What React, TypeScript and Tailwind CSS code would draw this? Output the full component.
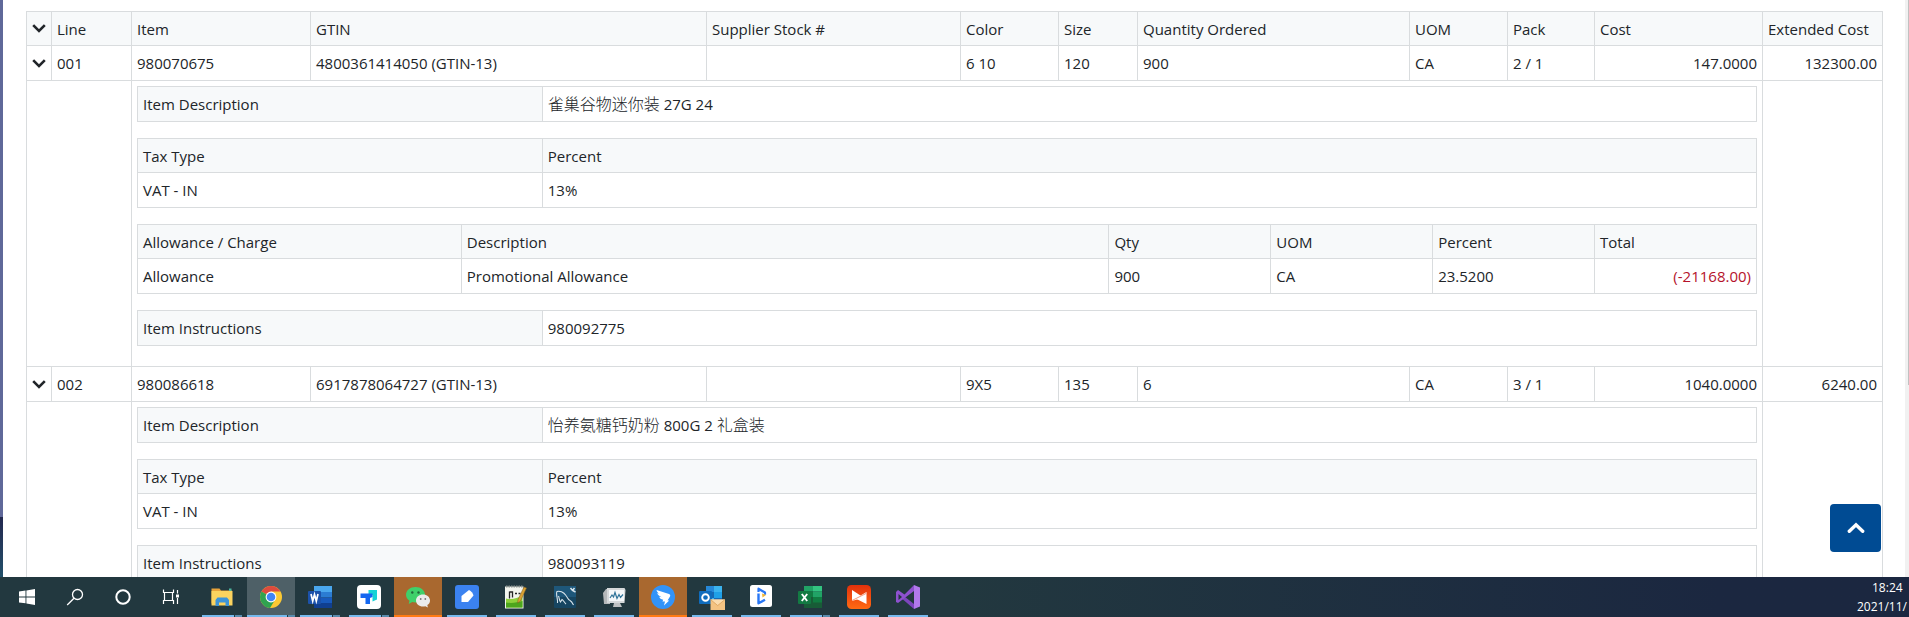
import React from "react";

type Line = {
  line: string;
  item: string;
  gtin: string;
  color: string;
  size: string;
  qty: string;
  pack: string;
  cost: string;
  extended: string;
  description: React.ReactNode;
  allowance?: string[];
  instructions: string;
};

const Han = ({ children }: { children: string }) => (
  <span lang="zh-CN" className="text-base leading-6 font-light">{children}</span>
);

const lines: Line[] = [
  {
    line: "001",
    item: "980070675",
    gtin: "4800361414050 (GTIN-13)",
    color: "6 10",
    size: "120",
    qty: "900",
    pack: "2 / 1",
    cost: "147.0000",
    extended: "132300.00",
    description: <><Han>雀巢谷物迷你装</Han> 27G 24</>,
    allowance: ["Allowance", "Promotional Allowance", "900", "CA", "23.5200", "(-21168.00)"],
    instructions: "980092775",
  },
  {
    line: "002",
    item: "980086618",
    gtin: "6917878064727 (GTIN-13)",
    color: "9X5",
    size: "135",
    qty: "6",
    pack: "3 / 1",
    cost: "1040.0000",
    extended: "6240.00",
    description: <><Han>怡养氨糖钙奶粉</Han> 800G 2 <Han>礼盒装</Han></>,
    instructions: "980093119",
  },
];

const table = "w-full table-fixed border-collapse";
const head = "h-[34px] border border-[#d9dcde] bg-[#f7f9fa] px-[5px] py-0 text-left font-normal";
const label = "h-[35px] border border-[#d9dcde] bg-[#f7f9fa] px-[5px] py-0 text-left font-normal";
const cell = "h-[35px] border border-[#d9dcde] px-[5px] py-0";

function Toggle({ name }: { name: string }) {
  return (
    <button type="button" aria-label={name} className="flex w-full items-center justify-center">
      <svg width="14" height="9" viewBox="0 0 14 9" fill="none" stroke="#212529" strokeWidth="2.6">
        <path d="M1.2 1.2 7 7l5.8-5.8" />
      </svg>
    </button>
  );
}

function PairTable({ name, children }: { name: string; children: React.ReactNode }) {
  return (
    <table className={table}>
      <tbody>
        <tr>
          <th scope="row" className={`${label} w-1/4`}>{name}</th>
          <td className={cell}>{children}</td>
        </tr>
      </tbody>
    </table>
  );
}

function TaxTable() {
  return (
    <table className={table}>
      <thead>
        <tr>
          <th className={`${head} w-1/4`}>Tax Type</th>
          <th className={head}>Percent</th>
        </tr>
      </thead>
      <tbody>
        <tr>
          <td className={cell}>VAT - IN</td>
          <td className={cell}>13%</td>
        </tr>
      </tbody>
    </table>
  );
}

function AllowanceTable({ values }: { values: string[] }) {
  return (
    <table className={table}>
      <thead>
        <tr>
          <th className={`${head} w-1/5`}>Allowance / Charge</th>
          <th className={`${head} w-2/5`}>Description</th>
          <th className={`${head} w-1/10`}>Qty</th>
          <th className={`${head} w-1/10`}>UOM</th>
          <th className={`${head} w-1/10`}>Percent</th>
          <th className={`${head} w-1/10`}>Total</th>
        </tr>
      </thead>
      <tbody>
        <tr>
          {values.map((v, i) => (
            <td key={i} className={i === 5 ? `${cell} text-right text-[#b5122b]` : cell}>{v}</td>
          ))}
        </tr>
      </tbody>
    </table>
  );
}

function LineRows({ l }: { l: Line }) {
  return (
    <>
      <tr>
        <td className={cell}><Toggle name={`Toggle line ${l.line}`} /></td>
        <td className={cell}>{l.line}</td>
        <td className={cell}>{l.item}</td>
        <td className={cell}>{l.gtin}</td>
        <td className={cell}></td>
        <td className={cell}>{l.color}</td>
        <td className={cell}>{l.size}</td>
        <td className={cell}>{l.qty}</td>
        <td className={cell}>CA</td>
        <td className={cell}>{l.pack}</td>
        <td className={`${cell} text-right`}>{l.cost}</td>
        <td className={`${cell} text-right`}>{l.extended}</td>
      </tr>
      <tr>
        <td colSpan={2} className={cell}></td>
        <td colSpan={9} className="border border-[#d9dcde] px-[5px] pt-[5px] pb-5">
          <div className="flex flex-col gap-4">
            <PairTable name="Item Description">{l.description}</PairTable>
            <TaxTable />
            {l.allowance && <AllowanceTable values={l.allowance} />}
            <PairTable name="Item Instructions">{l.instructions}</PairTable>
          </div>
        </td>
        <td className={cell}></td>
      </tr>
    </>
  );
}

const icon = { width: 26, height: 26, viewBox: "0 0 26 26" };

const Explorer = (
  <svg {...icon}>
    <path d="M2.500 4.500h8l1.500 2h11v13h-20.500z" fill="#e8a33a" />
    <path d="M2.500 7h21v14.500h-21z" fill="#fbd35f" />
    <path d="M20 4.500h2.500V7H20z" fill="#4db6a0" />
    <path d="M6.500 22v-6l2-2.500h9.500l2 2.500v6h-3.500v-3.500h-6.500V22z" fill="#3d94d8" />
  </svg>
);
const Chrome = (
  <svg {...icon}>
    <circle cx="13" cy="13" r="11" fill="#fcc934" />
    <path d="M13 13 3.500 7.500A11 11 0 0 1 22.500 7.500H13z" fill="#dd4b3e" />
    <path d="M3.500 7.500A11 11 0 0 0 12 24l5.200-8.500L13 13z" fill="#30a350" />
    <circle cx="13" cy="13" r="5.400" fill="#fff" />
    <circle cx="13" cy="13" r="4.300" fill="#4285f4" />
  </svg>
);
const Word = (
  <svg {...icon}>
    <path d="M7 2h18v6H7z" fill="#4aa7ee" />
    <path d="M7 8h18v5.500H7z" fill="#2b7cd3" />
    <path d="M7 13.500h18V19H7z" fill="#185abd" />
    <path d="M7 19h18v5H7z" fill="#103f91" />
    <rect x="1" y="7" width="13" height="13" rx="1" fill="#1c52ab" />
    <path d="m4 10 1.700 7L7.500 10.500 9.300 17 11 10" fill="none" stroke="#fff" strokeWidth="1.700" />
  </svg>
);
const Docs = (
  <svg {...icon}>
    <rect x="1" y="1" width="24" height="24" rx="4" fill="#fff" />
    <path d="M12.500 6H21v9.500l-4.500 2V11h-4z" fill="#16d3d6" />
    <path d="M4.500 9.500H16.500v3.500L14 14v6H9.500v-6h-5z" fill="#1467f0" />
  </svg>
);
const WeChat = (
  <svg {...icon}>
    <path d="M10.500 3C5.200 3 1 6.400 1 10.700c0 2.500 1.400 4.600 3.500 6L3.700 20l3.500-1.900c1 .3 2.200.4 3.300.4 5.300 0 9.500-3.400 9.500-7.700S15.800 3 10.500 3z" fill="#3fd06a" />
    <circle cx="7.300" cy="8.500" r="1.200" fill="#22653a" />
    <circle cx="13.500" cy="8.500" r="1.200" fill="#22653a" />
    <path d="M18 10.500c-4 0-7 2.600-7 6s3 6 7 6c.8 0 1.500-.1 2.300-.3l2.600 1.400-.6-2.500c1.700-1.100 2.700-2.600 2.700-4.600 0-3.400-3-6-7-6z" fill="#ebebeb" />
    <circle cx="15.700" cy="15" r=".9" fill="#777" />
    <circle cx="20.300" cy="15" r=".9" fill="#777" />
  </svg>
);
const BlueNote = (
  <svg {...icon}>
    <rect x="1" y="1" width="24" height="24" rx="3" fill="#3b82f0" />
    <path d="M7.500 18v-6L15 6c2.300 1.200 3.800 3 4.500 5.500L14 18z" fill="#fff" />
  </svg>
);
const Notepad = (
  <svg {...icon}>
    <path d="M2 2.500h18.500v22H2z" fill="#f3f5ee" />
    <path d="M3 14.500c6 1.500 11-.5 16.500-2.500v11.500H3z" fill="#8fd03c" />
    <path d="M3 18.500c6 1 11 0 16.500-1.500v6.500H3z" fill="#4da51d" />
    <path d="M3 2.500h17" stroke="#8a928f" strokeWidth="2" strokeDasharray="1.500 1" />
    <path d="M6.500 7.500v7M6.500 8h3v5.500M12 9.500h2m1.500 0h2" stroke="#262626" strokeWidth="1.300" fill="none" />
    <path d="m21 3 2.500 1-6 13-2.800 2 .3-3.500z" fill="#d9a032" stroke="#7d5a1c" strokeWidth=".5" />
  </svg>
);
const MySql = (
  <svg {...icon}>
    <rect x="2" y="2" width="22" height="22" rx="1" fill="#164561" />
    <path d="M2 2h22v11H2z" fill="#1e577a" />
    <path d="M5.500 19C6 15 3.500 9.500 5 7.500c2.500-1 6.500.5 9 4 1.500 2 2 4.500 4 5 1.500.700 2.500 2.500 3.500 4.500M6.500 12c1 2.500.5 4 2 6l1.500-2.500c1.500 1 2.500 3 4 4.500" fill="none" stroke="#d9e5ec" strokeWidth="1.100" />
    <path d="m18.500 4 2 2.500L23.500 8M20.500 6.500 22.500 4" fill="none" stroke="#d9e5ec" strokeWidth="1.500" />
  </svg>
);
const Monitor = (
  <svg {...icon}>
    <path d="M2 9 5 5h4v15H3z" fill="#b5b8ba" />
    <path d="M6 4h17.500l1 2-1 13H6z" fill="#d5d8da" />
    <path d="M8 6h15v11H8z" fill="#f4f7f9" />
    <path d="m9 14 2-3 1.500 2L14 8.500l2 6 2-4 1.500 3 2.500-3" fill="none" stroke="#2f7399" strokeWidth="1.200" />
    <path d="M13 19h6l2 4h-9z" fill="#bec1c3" />
  </svg>
);
const DingTalk = (
  <svg {...icon}>
    <circle cx="13" cy="13" r="12" fill="#3293f8" />
    <path d="M6.500 6 19 10c1.300.5 1.500 1.500 1 2.500l-2.500 4h1.700L14 21.500l1-4h-2.500l.7-1.700c-2.200-.5-3.500-1.500-4-3l2.500.4C9 12 7.600 10.800 7.300 9l2.200.8C7.600 8.600 6.700 7.500 6.500 6z" fill="#fff" />
  </svg>
);
const Outlook = (
  <svg {...icon}>
    <path d="M7 2h16v17H7z" fill="#1769b5" />
    <path d="M7 2h8v6H7z" fill="#2688d8" />
    <path d="M15 2h8v6h-8zM7 14h8v5H7z" fill="#3bb3ee" />
    <path d="M15 8h8v6h-8z" fill="#1fa0e7" />
    <rect x="0" y="7" width="13" height="13" rx="1" fill="#0f6cbd" />
    <circle cx="6.500" cy="13.500" r="3.300" fill="none" stroke="#fff" strokeWidth="1.900" />
    <path d="M11.500 15.500H26V26H11.500z" fill="#f4c382" />
    <path d="m11.500 15.500 7.200 6L26 15.500" fill="#fbdcae" stroke="#d59a50" strokeWidth=".7" />
  </svg>
);
const LetterApp = (
  <svg {...icon}>
    <rect x="2" y="1" width="22" height="22" rx="2.500" fill="#fff" />
    <path d="M10.500 8V4.700L17 8.500v2.200" fill="none" stroke="#2877f5" strokeWidth="2.200" strokeLinejoin="round" />
    <path d="M10.500 9.500v9.800l6.500-3.500" fill="none" stroke="#2877f5" strokeWidth="2.400" strokeLinejoin="round" />
    <path d="m14 9.500 4 1.500-3.500 2.500z" fill="#f5b52e" />
  </svg>
);
const Excel = (
  <svg {...icon}>
    <path d="M7 2h9v5.500H7z" fill="#21a366" />
    <path d="M16 2h9v5.500h-9z" fill="#33c481" />
    <path d="M7 7.500h9V13H7z" fill="#107c41" />
    <path d="M16 7.500h9V13h-9z" fill="#21a366" />
    <path d="M7 13h18v11H7z" fill="#185c37" />
    <path d="M16 13h9v5.500h-9z" fill="#107c41" />
    <rect x="1" y="7" width="13" height="13" rx="1" fill="#137a43" />
    <path d="m4.800 10 5.400 7M10.200 10l-5.400 7" stroke="#fff" strokeWidth="1.900" />
  </svg>
);
const RedApp = (
  <svg {...icon}>
    <defs>
      <linearGradient id="recorder" x1="0" y1="0" x2="0" y2="1">
        <stop stopColor="#e2310b" />
        <stop offset="1" stopColor="#ff6a13" />
      </linearGradient>
    </defs>
    <rect x="1" y="1" width="24" height="24" rx="4.500" fill="url(#recorder)" />
    <path d="M6 6 17.500 13.500 6 17z" fill="#fff" />
    <path d="M20.500 8v12L9.500 14.500z" fill="#fff" />
    <path d="m6 16.500 14-7" stroke="#ee4a10" strokeWidth=".8" opacity=".7" />
  </svg>
);
const VisualStudio = (
  <svg {...icon}>
    <path d="m1 8.500 2-1L19 20v5L1.500 10z" fill="#7c45bd" />
    <path d="M1 8v10l2 1L19 7V1L9.500 10.500 3 6z" fill="#8e51d0" />
    <path d="M3.500 10v6L7 13z" fill="#22373f" />
    <path d="m19 1 6 2.500v19L19 25z" fill="#b179ec" />
    <path d="M19 8v10l-6.500-5z" fill="#22373f" />
  </svg>
);

const apps: { name: string; art: React.ReactNode; alert?: boolean; active?: boolean; many?: boolean }[] = [
  { name: "File Explorer", art: Explorer, many: true },
  { name: "Chrome", art: Chrome, active: true, many: true },
  { name: "Word", art: Word, many: true },
  { name: "Docs", art: Docs, many: true },
  { name: "WeChat", art: WeChat, alert: true },
  { name: "Notes", art: BlueNote },
  { name: "Text editor", art: Notepad },
  { name: "MySQL Workbench", art: MySql },
  { name: "Monitor", art: Monitor },
  { name: "DingTalk", art: DingTalk, alert: true },
  { name: "Outlook", art: Outlook },
  { name: "Client", art: LetterApp },
  { name: "Excel", art: Excel, many: true },
  { name: "Recorder", art: RedApp },
  { name: "Visual Studio", art: VisualStudio },
];

const system = [
  {
    name: "Start",
    art: (
      <svg width="18" height="18" viewBox="0 0 18 18" fill="#fff">
        <path d="M1 3.500 7.500 2.600v5.900H1zM8.400 2.400 17 1v7.500H8.400zM1 9.400h6.500v5.900L1 14.500zM8.400 9.400H17V17l-8.600-1.400z" />
      </svg>
    ),
  },
  {
    name: "Search",
    art: (
      <svg width="18" height="18" viewBox="0 0 18 18" fill="none" stroke="#fff" strokeWidth="1.300">
        <circle cx="11.500" cy="6.500" r="5" />
        <path d="M8 10.200 1.200 17" />
      </svg>
    ),
  },
  {
    name: "Cortana",
    art: (
      <svg width="18" height="18" viewBox="0 0 18 18" fill="none" stroke="#fff" strokeWidth="2">
        <circle cx="9" cy="9" r="6.700" />
      </svg>
    ),
  },
  {
    name: "Task view",
    art: (
      <svg width="18" height="18" viewBox="0 0 18 18" fill="none" stroke="#fff" strokeWidth="1.200">
        <path d="M1.500 1.500v3h10v-3M2.500 4.500v8h8v-8M1.500 16v-3.500h10V16M15.500 2v3.500M15.500 10v6" />
        <path d="M14 6.500h3v3h-3z" fill="#fff" stroke="none" />
      </svg>
    ),
  },
];

function Taskbar() {
  return (
    <footer className="flex h-10 shrink-0 items-stretch overflow-hidden bg-linear-to-r from-[#22383f] from-50% to-[#1b2740] to-90% pl-[3px] text-white">
      <nav aria-label="System" className="flex">
        {system.map((s) => (
          <button key={s.name} type="button" aria-label={s.name} className="flex w-12 items-center justify-center">
            {s.art}
          </button>
        ))}
      </nav>
      <nav aria-label="Applications" className="flex gap-px pl-[3px]">
        {apps.map((a) => (
          <button
            key={a.name}
            type="button"
            aria-label={a.name}
            className={`flex w-12 flex-col items-center ${a.alert ? "bg-[#a9682f]" : a.active ? "bg-[#4e6067]" : ""}`}
          >
            <span className="flex flex-1 items-center pt-px">{a.art}</span>
            <span className={`flex h-0.5 justify-end ${a.alert ? "w-full bg-[#ff7a14]" : a.active ? "w-full bg-[#76b9ed]" : "w-10 bg-[#76b9ed]"}`}>
              {a.many && <span className="w-2 border-l border-[#22383f] bg-[#5a8cae]" />}
            </span>
          </button>
        ))}
      </nav>
      <time className="ml-auto flex w-[52px] shrink-0 flex-col justify-center text-xs leading-[19px] whitespace-nowrap">
        <span className="pl-[15px]">18:24</span>
        <span>2021/11/</span>
      </time>
    </footer>
  );
}

export default function App() {
  return (
    <div className="flex h-screen flex-col bg-white font-['Open_Sans','Noto_Sans_CJK_SC',sans-serif] text-[15px] leading-6 text-[#212529]">
      <div className="relative flex min-h-0 flex-1">
        <div className="flex w-[3px] shrink-0 flex-col">
          <div className="flex-1 bg-[#5f6899]" />
          <div className="h-[60px] bg-linear-to-b from-[#22284f] to-[#21506a]" />
        </div>
        <main className="min-w-0 flex-1 overflow-hidden pt-[11px] pr-[22px] pl-[23px]">
          <table className={table}>
            <colgroup>
              <col className="w-[25px]" />
              <col className="w-20" />
              <col className="w-[179px]" />
              <col />
              <col className="w-[254px]" />
              <col className="w-[98px]" />
              <col className="w-[79px]" />
              <col className="w-[272px]" />
              <col className="w-[98px]" />
              <col className="w-[87px]" />
              <col className="w-[168px]" />
              <col className="w-[120px]" />
            </colgroup>
            <thead>
              <tr>
                <th className={head}><Toggle name="Toggle all lines" /></th>
                {["Line", "Item", "GTIN", "Supplier Stock #", "Color", "Size", "Quantity Ordered", "UOM", "Pack", "Cost", "Extended Cost"].map((h) => (
                  <th key={h} className={`${head} whitespace-nowrap`}>{h}</th>
                ))}
              </tr>
            </thead>
            <tbody>
              {lines.map((l) => <LineRows key={l.line} l={l} />)}
            </tbody>
          </table>
        </main>
        <div className="flex w-1 shrink-0 flex-col bg-[#f1f1f1]">
          <div className="ml-auto h-2/3 w-px bg-[#c1c1c1]" />
        </div>
        <button
          type="button"
          aria-label="Back to top"
          className="absolute right-7 bottom-[25px] flex h-12 w-[51px] items-center justify-center rounded bg-[#004b93]"
        >
          <svg width="18" height="12" viewBox="0 0 18 12" fill="none" stroke="#fff" strokeWidth="3.400" strokeLinecap="round">
            <path d="m2.300 9.300 6.700-6.500 6.700 6.500" />
          </svg>
        </button>
      </div>
      <Taskbar />
    </div>
  );
}
